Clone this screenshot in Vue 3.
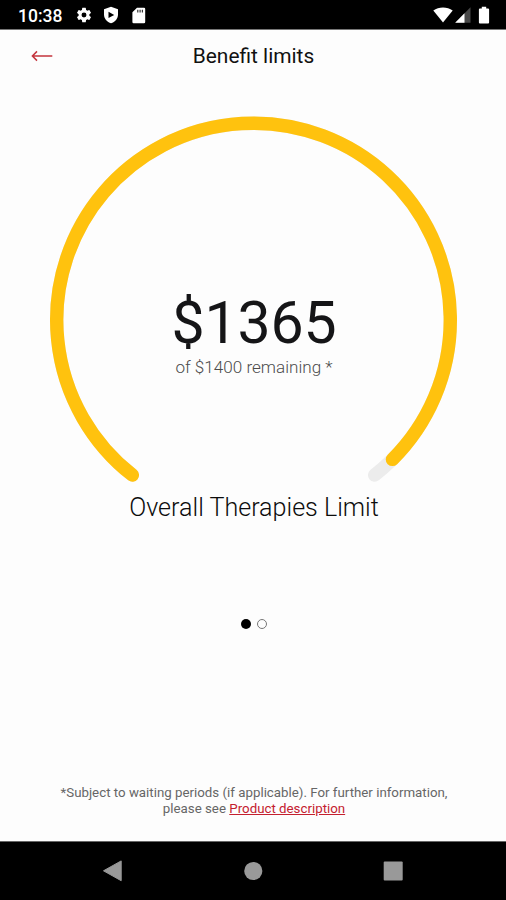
<script setup>
const limit = { remaining: 1365, total: 1400, name: 'Overall Therapies Limit' }

const centre = { x: 253.5, y: 220 }
const radius = 196.8
const startAngle = 218
const trackEnd = 142
const valueEnd = 135.1

function point(angle) {
  const a = (angle * Math.PI) / 180
  return `${(centre.x + radius * Math.sin(a)).toFixed(2)} ${(centre.y - radius * Math.cos(a)).toFixed(2)}`
}

function arc(from, to) {
  const large = (to - from + 360) % 360 > 180 ? 1 : 0
  return `M${point(from)} A${radius} ${radius} 0 ${large} 1 ${point(to)}`
}

const trackPath = arc(startAngle, trackEnd)
const valuePath = arc(startAngle, valueEnd)
</script>

<template>
  <div class="screen">
    <div class="status">
      <span class="clock">10:38</span>
      <svg class="gear" width="18" height="18" viewBox="0 0 24 24" fill="#fff">
        <path d="M19.14 12.94c.04-.3.06-.61.06-.94s-.02-.64-.07-.94l2.03-1.58a.49.49 0 0 0 .12-.61l-1.92-3.32a.49.49 0 0 0-.59-.22l-2.39.96a7 7 0 0 0-1.62-.94l-.36-2.54a.48.48 0 0 0-.48-.41h-3.84a.47.47 0 0 0-.47.41l-.36 2.54c-.59.24-1.13.57-1.62.94l-2.39-.96a.48.48 0 0 0-.59.22L2.74 8.87a.47.47 0 0 0 .12.61l2.03 1.58a6 6 0 0 0-.02 1.88l-2.03 1.58a.49.49 0 0 0-.12.61l1.92 3.32c.12.22.37.29.59.22l2.39-.96c.5.38 1.03.7 1.62.94l.36 2.54c.05.24.24.41.48.41h3.84c.24 0 .44-.17.47-.41l.36-2.54c.59-.24 1.13-.56 1.62-.94l2.39.96c.22.08.47 0 .59-.22l1.92-3.32a.47.47 0 0 0-.12-.61zM12 15.3a3.3 3.3 0 1 1 0-6.6 3.3 3.3 0 0 1 0 6.6z" />
      </svg>
      <svg class="shield" width="16" height="18" viewBox="0 0 16 18">
        <path d="M8 .8 15 3.2V8.5C15 12.8 12 16 8 17.3 4 16 1 12.8 1 8.5V3.2z" fill="#fff" />
        <path d="M5.5 5.8 11.2 8.9 5.5 12z" fill="#000" />
      </svg>
      <svg class="card" width="14" height="17" viewBox="0 0 14 17">
        <path d="M5 .7H12a1.2 1.2 0 0 1 1.2 1.2V15a1.2 1.2 0 0 1-1.2 1.2H1.6A1.2 1.2 0 0 1 .4 15V5.3z" fill="#fff" />
        <path d="M5.2 2.8h1.2v2.6H5.2zM7.5 2.8h1.2v2.6H7.5zM9.8 2.8H11v2.6H9.8z" fill="#333" />
      </svg>
      <span class="spacer"></span>
      <svg class="wifi" width="20" height="16" viewBox="0 0 20 16">
        <path d="M10 15.4.3 3.5C5.8-.5 14.2-.5 19.7 3.5z" fill="#fff" />
      </svg>
      <svg class="signal" width="16" height="16" viewBox="0 0 16 16">
        <path d="M15.5.3V15.7H.2z" fill="#484848" />
        <path d="M9.5 6.3V15.7H.2z" fill="#fff" />
      </svg>
      <svg class="battery" width="12" height="18" viewBox="0 0 12 18">
        <path d="M3.8.8h4.4v1.7h1.9a1 1 0 0 1 1 1V16.5a1 1 0 0 1-1 1H1.9a1 1 0 0 1-1-1V3.5a1 1 0 0 1 1-1h1.9z" fill="#fff" />
      </svg>
    </div>

    <header class="header">
      <svg class="back" width="22" height="14" viewBox="0 0 22 14" fill="none" stroke="#c4343d" stroke-width="1.5">
        <path d="M21.3 7H1.4M6 2.4 1.4 7 6 11.6" />
      </svg>
      <h1 class="title">Benefit limits</h1>
    </header>

    <main class="content">
      <div class="gauge">
        <svg class="ring" width="506" height="400" viewBox="0 0 506 400" fill="none" stroke-width="13.4" stroke-linecap="round">
          <path :d="trackPath" stroke="#ececec" />
          <path :d="valuePath" stroke="#ffc20e" />
        </svg>
        <div class="reading">
          <div class="amount">${{ limit.remaining }}</div>
          <div class="total">of ${{ limit.total }} remaining *</div>
        </div>
      </div>
      <h2 class="name">{{ limit.name }}</h2>
      <div class="pager">
        <span class="dot active"></span>
        <span class="dot"></span>
      </div>
      <p class="note">
        *Subject to waiting periods (if applicable). For further information,<br />
        please see <a class="link">Product description</a>
      </p>
    </main>

    <nav class="navbar">
      <svg width="20" height="22" viewBox="0 0 20 22"><path d="M18.2.9V20.7L.5 10.8z" fill="#999" stroke="#999" stroke-linejoin="round" /></svg>
      <svg width="20" height="20" viewBox="0 0 20 20"><circle cx="10.3" cy="10" r="9.1" fill="#999" /></svg>
      <svg width="20" height="20" viewBox="0 0 20 20"><rect x=".7" y=".5" width="19" height="19" rx="1" fill="#999" /></svg>
    </nav>
  </div>
</template>

<style>
body {
  background: #fdfdfd;
}
</style>

<style scoped>
.screen {
  box-sizing: border-box;
  width: 506px;
  height: 900px;
  display: flex;
  flex-direction: column;
  overflow: hidden;
  background: #fdfdfd;
  font-family: Roboto, sans-serif;
  color: #161618;
}
.status {
  flex: none;
  box-sizing: border-box;
  height: 30px;
  display: flex;
  align-items: center;
  padding: 1px 16px 0 18px;
  background: #000;
  border-bottom: 1px solid #777;
}
.clock {
  width: 57px;
  padding-top: 1px;
  font-size: 17.5px;
  line-height: 20px;
  font-weight: 500;
  color: #fff;
}
.shield {
  margin-left: 10px;
}
.card {
  margin-left: 13px;
}
.spacer {
  flex: 1;
}
.signal {
  margin-left: 2px;
}
.battery {
  margin-left: 7px;
}
.header {
  flex: none;
  height: 51px;
  display: grid;
  grid-template-columns: 64px 1fr 63px;
  align-items: center;
}
.back {
  margin-left: 31px;
}
.title {
  margin: 0;
  text-align: center;
  font-size: 20.9px;
  line-height: 24px;
  font-weight: 400;
  color: #111;
}
.content {
  flex: 1;
  display: flex;
  flex-direction: column;
  align-items: center;
  padding-top: 19px;
}
.gauge {
  display: grid;
  width: 506px;
  height: 385px;
}
.ring,
.reading {
  grid-area: 1 / 1;
}
.reading {
  padding: 189px 0 0 2px;
  text-align: center;
}
.amount {
  font-size: 59px;
  line-height: 68px;
  letter-spacing: -0.2px;
  color: #151517;
}
.total {
  font-size: 17.1px;
  line-height: 20px;
  font-weight: 300;
  color: #4c4c4c;
}
.name {
  margin: 8px 0 0;
  padding-left: 2px;
  font-size: 25.1px;
  line-height: 30px;
  font-weight: 300;
  color: #0c0c0c;
}
.pager {
  display: flex;
  gap: 6px;
  margin-top: 96px;
  padding-left: 1px;
}
.dot {
  box-sizing: border-box;
  width: 10px;
  height: 10px;
  border: 1px solid #777;
  border-radius: 50%;
}
.dot.active {
  border: 0;
  background: #000;
}
.note {
  margin: auto 0 24px;
  padding-left: 2px;
  text-align: center;
  font-size: 13.3px;
  line-height: 16px;
  color: #666;
}
.link {
  color: #c4202f;
  text-decoration: underline;
}
.navbar {
  flex: none;
  box-sizing: border-box;
  height: 59px;
  display: flex;
  align-items: center;
  justify-content: space-between;
  padding: 0 103px;
  background: #000;
  border-top: 1px solid #666;
}
</style>
